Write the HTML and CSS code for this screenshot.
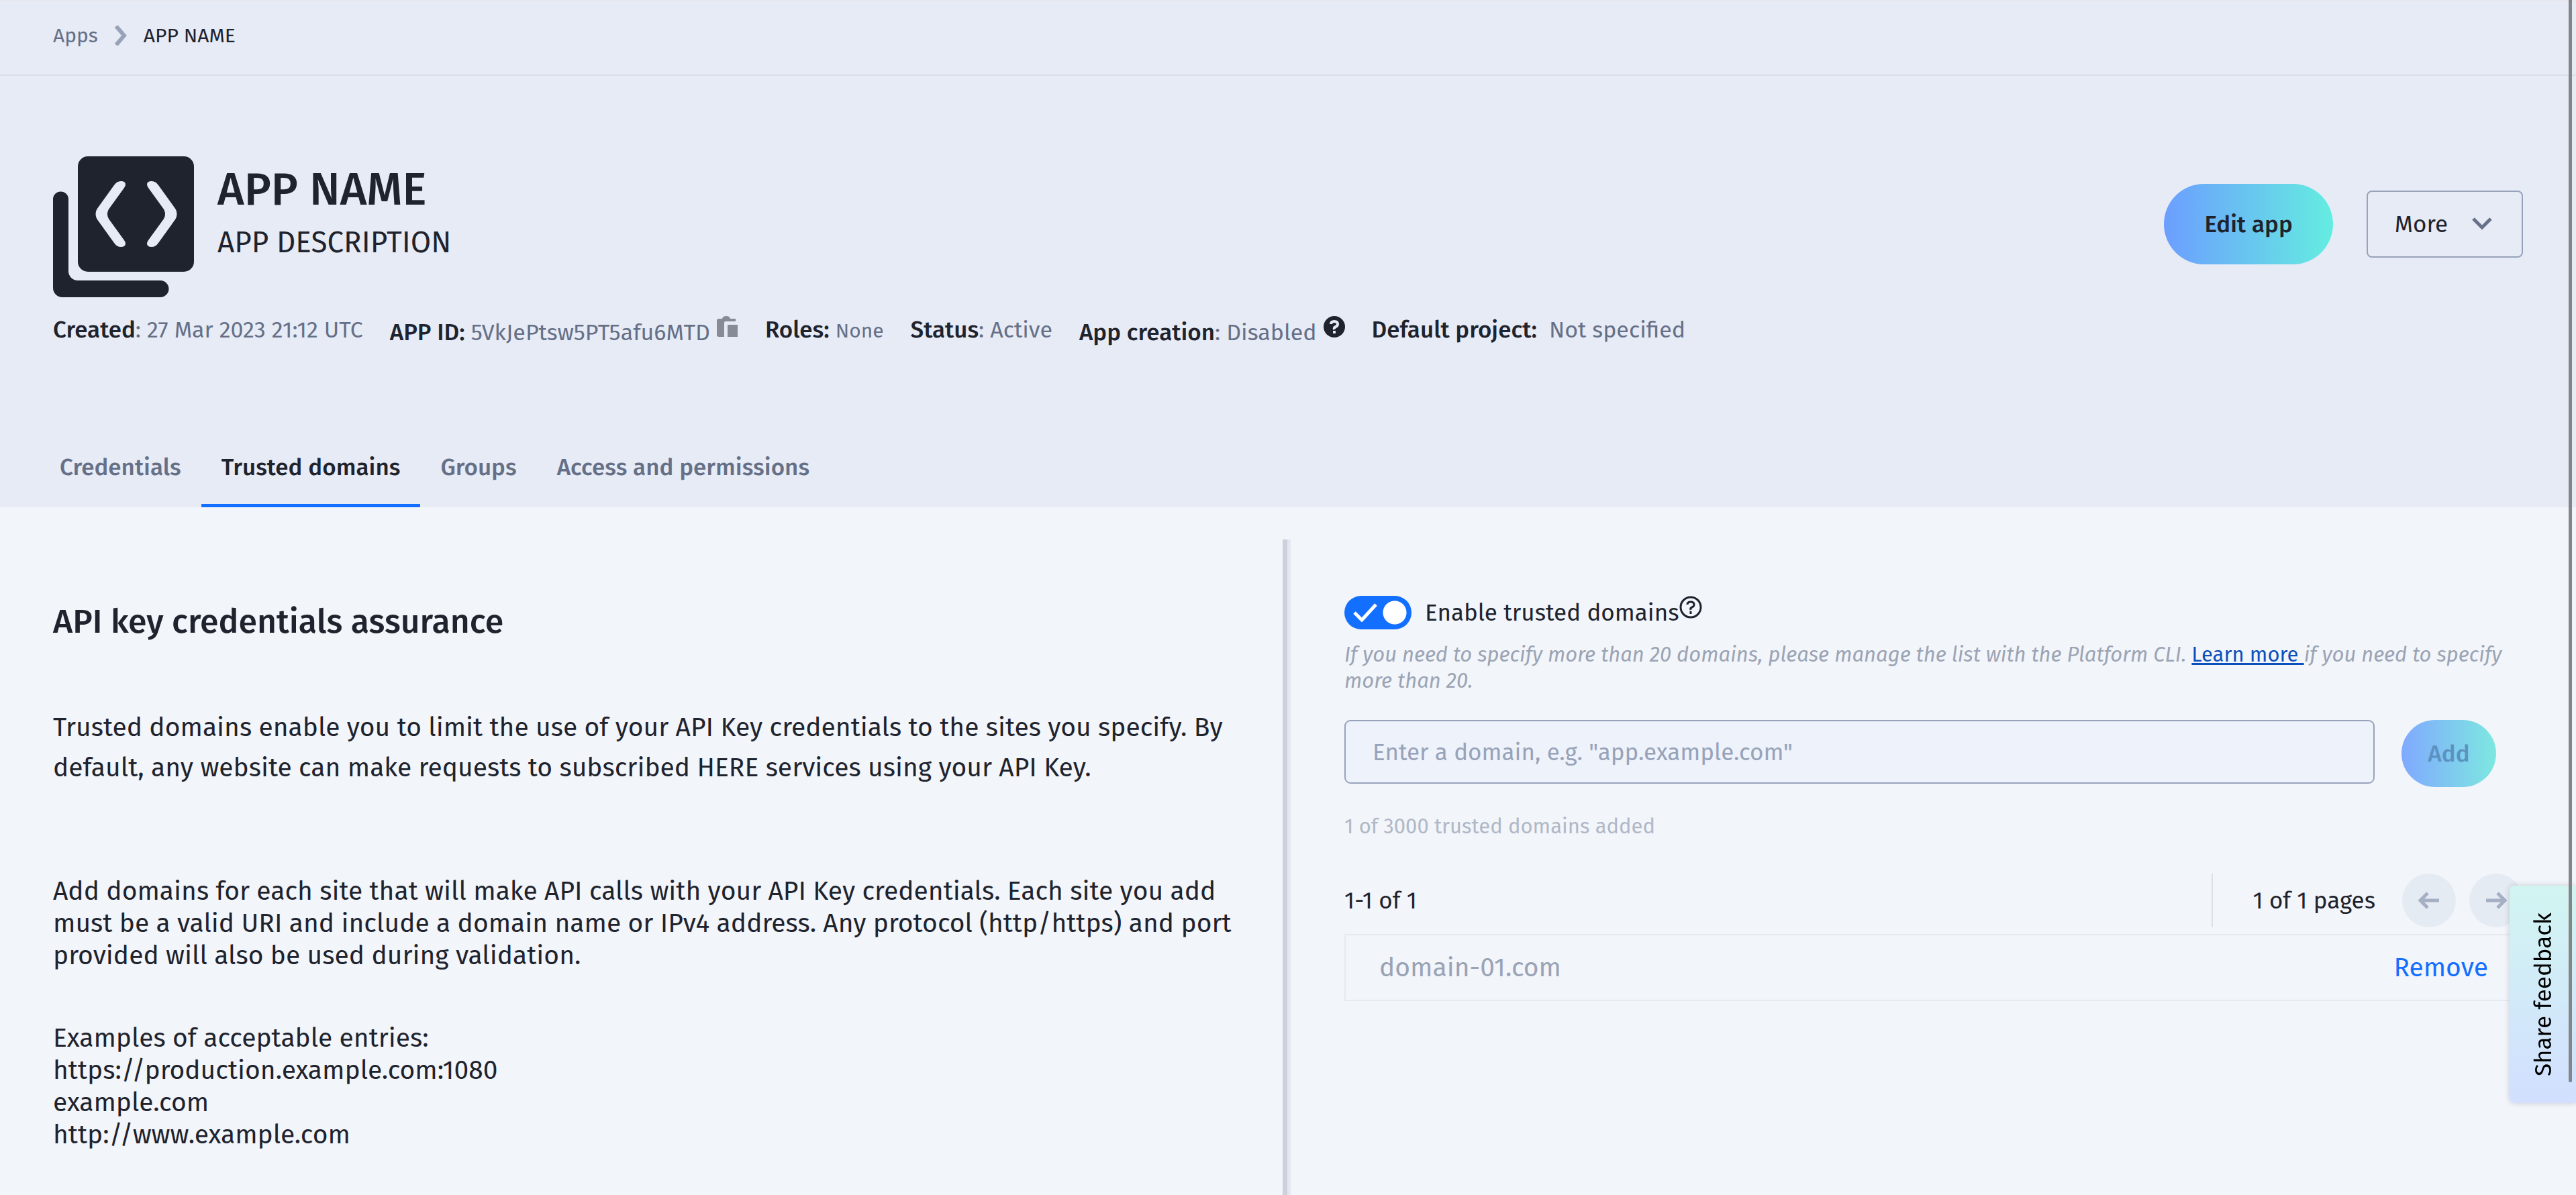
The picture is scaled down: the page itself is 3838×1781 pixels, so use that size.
FILE: index.html
```html
<!DOCTYPE html>
<html lang="en">
<head>
    <meta charset="UTF-8">
    <meta name="viewport" content="width=device-width, initial-scale=1.0">
    <title>APP NAME - Trusted domains</title>
    <link rel="stylesheet" href="styles.css">
</head>
<body>
    <header class="page-header">
        <nav class="breadcrumb" aria-label="Breadcrumb">
            <a href="#">Apps</a>
            <svg class="crumb-arrow" viewBox="0 0 20 30" aria-hidden="true"><path d="M3 1l12 14L3 29" /></svg>
            <span class="crumb-current">APP NAME</span>
        </nav>

        <!-- App title and actions -->
        <div class="app-bar">
            <svg class="app-icon" viewBox="0 0 210 210" aria-hidden="true">
                <path class="solid" d="M0 64a11.500 11.500 0 0 1 23 0V171a14 14 0 0 0 14 14H160a12.500 12.500 0 0 1 0 25H14a14 14 0 0 1-14-14z" />
                <rect class="solid" x="37" y="0" width="173" height="172" rx="15" />
                <path class="bracket" d="M101 37Q95 37 91 43L68 75Q59 86 68 97L91 129Q95 135 101 135Q108 135 108 130Q108 128 106 125L85 96Q77 86 85 76L106 47Q108 44 108 42Q108 37 101 37z" />
                <path class="bracket" d="M147 37Q153 37 157 43L180 75Q189 86 180 97L157 129Q153 135 147 135Q140 135 140 130Q140 128 142 125L163 96Q171 86 163 76L142 47Q140 44 140 42Q140 37 147 37z" />
            </svg>
            <div class="app-title">
                <h1>APP NAME</h1>
                <p>APP DESCRIPTION</p>
            </div>
            <div class="app-actions">
                <button class="btn-primary" type="button">Edit app</button>
                <button class="btn-more" type="button">More
                    <svg viewBox="0 0 30 20" aria-hidden="true"><path d="M2 2l13 13L28 2" /></svg>
                </button>
            </div>
        </div>

        <!-- App details -->
        <div class="meta">
            <div><b>Created</b>: 27 Mar 2023 21:12 UTC</div>
            <div class="with-icon">
                <span><b>APP ID:</b> 5VkJePtsw5PT5afu6MTD</span>
                <button class="icon-button" type="button" aria-label="Copy app ID">
                    <svg viewBox="0 0 32 32" aria-hidden="true">
                        <path d="M3 4H8Q9 0 14 0T20 4H28V8H13Q11 8 11 10V31H3Q0 31 0 28V7Q0 4 3 4z" />
                        <path d="M16 13H31V31H16z" />
                    </svg>
                </button>
            </div>
            <div><b>Roles:</b> <small>None</small></div>
            <div><b>Status</b>: Active</div>
            <div class="with-icon">
                <span><b>App creation</b>: Disabled</span>
                <svg class="help-solid" viewBox="0 0 32 32" aria-hidden="true">
                    <circle cx="16" cy="16" r="16" />
                    <path d="M11 12Q11 8 16 8T21 12Q21 15 18 16T16 20" />
                    <rect x="14" y="22" width="4" height="4" />
                </svg>
            </div>
            <div><b>Default project:</b>&nbsp; Not specified</div>
        </div>

        <nav class="tabs">
            <a href="#">Credentials</a>
            <a href="#" class="active" aria-current="page">Trusted domains</a>
            <a href="#">Groups</a>
            <a href="#">Access and permissions</a>
        </nav>
    </header>

    <main class="content">
        <section class="info">
            <h2>API key credentials assurance</h2>
            <p class="intro">Trusted domains enable you to limit the use of your API Key credentials to the sites you specify. By default, any website can make requests to subscribed HERE services using your API Key.</p>
            <p>Add domains for each site that will make API calls with your API Key credentials. Each site you add must be a valid URI and include a domain name or IPv4 address. Any protocol (http/https) and port provided will also be used during validation.</p>
            <p>Examples of acceptable entries:<br>
                https://production.example.com:1080<br>
                example.com<br>
                http://www.example.com</p>
        </section>

        <section class="domains">
            <div class="switch-row">
                <span class="switch">
                    <input type="checkbox" id="enableDomains" checked>
                    <svg viewBox="0 0 36 28" aria-hidden="true"><path d="M2 14l11 11L34 2" /></svg>
                </span>
                <label for="enableDomains">Enable trusted domains</label>
                <svg class="help" viewBox="0 0 34 34" aria-hidden="true">
                    <circle cx="17" cy="17" r="15" />
                    <path d="M12 13Q12 9 17 9T22 13Q22 16 19 17T17 21" />
                    <path d="M17 23V27" />
                </svg>
            </div>
            <p class="hint">If you need to specify more than 20 domains, please manage the list with the Platform CLI. <a href="#">Learn more </a>if you need to specify more than 20.</p>

            <form class="add-form">
                <input type="text" id="domain" aria-label="Domain" placeholder='Enter a domain, e.g. "app.example.com"'>
                <button type="button" class="btn-add" disabled>Add</button>
            </form>
            <p class="count">1 of 3000 trusted domains added</p>

            <div class="pager">
                <span>1-1 of 1</span>
                <div class="pager-nav">
                    <span class="pages">1 of 1 pages</span>
                    <button type="button" aria-label="Previous page" disabled>
                        <svg viewBox="0 0 32 26" aria-hidden="true"><path d="M31 13H3M14 2L3 13l11 11" /></svg>
                    </button>
                    <button type="button" aria-label="Next page" disabled>
                        <svg viewBox="0 0 32 26" aria-hidden="true"><path d="M1 13H29M18 2l11 11-11 11" /></svg>
                    </button>
                </div>
            </div>
            <table class="domain-table">
                <tbody>
                    <tr>
                        <td>domain-01.com</td>
                        <td class="action"><button type="button">Remove</button></td>
                    </tr>
                </tbody>
            </table>
        </section>
    </main>

    <button class="feedback" type="button"><span>Share feedback</span></button>
    <div class="scroll-thumb"></div>
</body>
</html>
```

FILE: styles.css
```css
/* General styles */
* {
    box-sizing: border-box;
}

body {
    margin: 0;
    min-height: 100vh;
    display: flex;
    flex-direction: column;
    background: #f2f5fa;
    color: #1e232d;
    font-family: "Fira Sans", "Lato", sans-serif;
    font-size: 35px;
    line-height: 48px;
}

h1, h2, p {
    margin: 0;
}

button, input {
    font: inherit;
    color: inherit;
}

button {
    border: none;
    padding: 0;
    background: none;
    cursor: pointer;
}

svg {
    fill: none;
    flex: none;
}

/* Header */
.page-header {
    background: #e7ebf6;
    border-top: 2px solid #e6e8ee;
}

.breadcrumb {
    display: flex;
    align-items: center;
    gap: 24px;
    height: 111px;
    padding: 0 79px 8px;
    border-bottom: 2px solid #dbdfea;
    font-size: 30px;
}

.breadcrumb a {
    color: #657087;
    text-decoration: none;
}

.crumb-arrow {
    width: 20px;
    height: 30px;
    stroke: #98a3b9;
    stroke-width: 6;
}

.app-bar {
    display: flex;
    align-items: center;
    padding: 120px 79px 0;
}

.app-icon {
    width: 210px;
    height: 210px;
}

.solid {
    fill: #1e232d;
}

.bracket {
    fill: #e7ebf6;
}

.app-title {
    margin-left: 35px;
    padding-bottom: 36px;
}

.app-title h1 {
    margin-bottom: 4px;
    font-size: 68px;
    font-weight: 500;
    line-height: 80px;
}

.app-title p {
    font-size: 44px;
    line-height: 72px;
}

.app-actions {
    display: flex;
    align-items: center;
    gap: 50px;
    margin-left: auto;
    padding-bottom: 8px;
}

.btn-primary {
    height: 120px;
    padding: 0 60px;
    border-radius: 60px;
    background: linear-gradient(90deg, #6c9eff, #64ede0);
    font-weight: 500;
}

.btn-more {
    display: flex;
    align-items: center;
    gap: 36px;
    height: 100px;
    padding: 0 44px 0 40px;
    border: 2px solid #97a3bb;
    border-radius: 8px;
}

.btn-more svg {
    width: 30px;
    height: 20px;
    stroke: #667088;
    stroke-width: 5;
}

.meta {
    display: flex;
    gap: 40px;
    padding: 24px 79px 0;
    color: #657087;
    font-size: 34px;
}

.meta b {
    color: #1e232d;
    font-size: 35px;
    font-weight: 500;
}

.meta small {
    font-size: 30px;
}

.with-icon {
    display: flex;
    gap: 10px;
    padding-top: 4px;
}

.icon-button {
    align-self: flex-start;
}

.icon-button svg,
.help-solid {
    display: block;
    width: 32px;
    height: 32px;
}

.icon-button svg {
    fill: #868b96;
}

.help-solid {
    fill: #1e232d;
}

.help-solid path {
    fill: none;
    stroke: #e7ebf6;
    stroke-width: 4;
}

.help-solid rect {
    fill: #e7ebf6;
}

.tabs {
    display: flex;
    padding: 126px 59px 0;
}

.tabs a {
    padding: 26px 30px 31px;
    border-bottom: 5px solid transparent;
    color: #657087;
    font-weight: 500;
    text-decoration: none;
}

.tabs .active {
    border-color: #136fff;
    color: #1e232d;
}

/* Content */
.content {
    flex: 1;
    display: grid;
    grid-template-columns: calc(50% - 8px) 1fr;
    padding-top: 48px;
}

.info {
    padding: 92px 60px 0 79px;
    font-size: 39px;
}

.info h2 {
    font-size: 50px;
    font-weight: 500;
    line-height: 60px;
}

.info p {
    margin-bottom: 75px;
}

.info .intro {
    margin: 98px 0 130px;
    line-height: 60px;
}

.info p:last-child {
    margin-bottom: 0;
}

.domains {
    padding: 84px 79px 0 85px;
    border-left: 7px solid #cdd0dd;
    box-shadow: inset 5px 0 #e4e7ef;
}

.switch-row {
    display: flex;
    align-items: center;
    height: 50px;
}

.switch {
    position: relative;
    height: 50px;
    margin-right: 20px;
}

.switch input {
    appearance: none;
    display: block;
    width: 100px;
    height: 50px;
    margin: 0;
    border-radius: 25px;
    background: radial-gradient(circle at 75px 25px, white 17px, #136fff 18px);
}

.switch svg {
    position: absolute;
    left: 13px;
    top: 11px;
    width: 36px;
    height: 28px;
    stroke: white;
    stroke-width: 5;
    pointer-events: none;
}

.help {
    align-self: flex-start;
    width: 34px;
    height: 34px;
    stroke: #1e232d;
    stroke-width: 3;
}

.hint {
    margin-top: 18px;
    color: #9ba4b4;
    font-size: 31px;
    font-style: italic;
    line-height: 39px;
}

.hint a {
    color: #0c50bd;
    font-style: normal;
}

.add-form {
    display: flex;
    align-items: flex-start;
    gap: 40px;
    margin-top: 39px;
    padding-right: 40px;
}

.add-form input {
    flex: 1;
    height: 95px;
    padding: 0 40px;
    border: 2px solid #97a3bb;
    border-radius: 9px;
    background: #eef2fb;
}

.add-form input::placeholder {
    color: #97a3b9;
}

.btn-add {
    width: 141px;
    height: 100px;
    border-radius: 50px;
    background: linear-gradient(90deg, #80a9ff, #7de8e0);
    color: #5c92c1;
    font-weight: 500;
}

.count {
    margin-top: 35px;
    color: #b0b8c7;
    font-size: 31px;
}

.pager {
    display: flex;
    justify-content: space-between;
    align-items: center;
    margin-top: 46px;
}

.pager-nav {
    display: flex;
    align-items: center;
    gap: 20px;
    padding-left: 60px;
    border-left: 2px solid #dce2ea;
}

.pages {
    margin-right: 20px;
}

.pager button {
    display: grid;
    place-items: center;
    width: 80px;
    height: 80px;
    border-radius: 50%;
    background: #e5ebf3;
}

.pager svg {
    width: 32px;
    height: 26px;
    stroke: #a6b0c4;
    stroke-width: 5;
}

.domain-table {
    width: 100%;
    height: 100px;
    margin-top: 10px;
    border: 2px solid #e6eaf0;
    border-spacing: 0;
    font-size: 39px;
}

.domain-table td {
    padding: 0 50px;
    color: #9aa3b5;
}

.domain-table .action {
    text-align: right;
}

.domain-table button {
    color: #136fff;
}

/* Overlays */
.feedback {
    position: fixed;
    right: 0;
    top: 1320px;
    width: 99px;
    padding: 40px 0;
    border-radius: 8px 0 0 8px;
    background: linear-gradient(#d1f5f1, #d2dfff);
    box-shadow: 0 0 8px rgba(30, 35, 45, 0.2);
    color: black;
    line-height: 40px;
}

.feedback span {
    display: block;
    margin: 0 auto;
    width: 40px;
    writing-mode: vertical-rl;
    transform: rotate(180deg);
}

.scroll-thumb {
    position: fixed;
    right: 6px;
    top: 0;
    width: 5px;
    height: 1613px;
    border-radius: 0 0 3px 3px;
    background: #838587;
}
```
